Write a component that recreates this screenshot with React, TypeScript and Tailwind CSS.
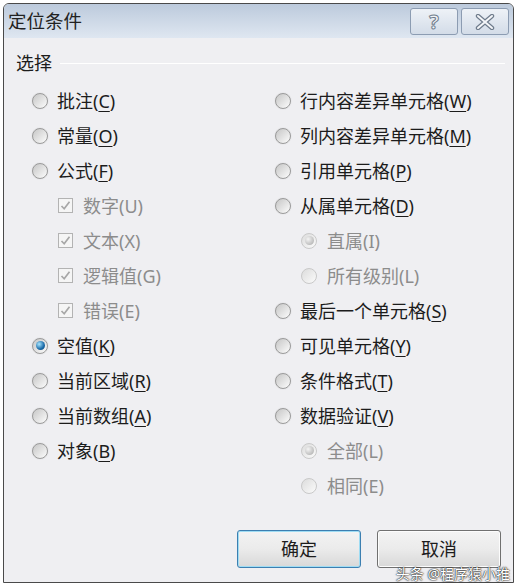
type Item = {
  label: string;
  key?: string;
  kind: "radio" | "check";
  sub?: boolean;
  disabled?: boolean;
  checked?: boolean;
  underline?: boolean;
};

const leftItems: Item[] = [
  { label: "批注", key: "C", kind: "radio", underline: true },
  { label: "常量", key: "O", kind: "radio", underline: true },
  { label: "公式", key: "F", kind: "radio", underline: true },
  { label: "数字", key: "U", kind: "check", sub: true, disabled: true, checked: true },
  { label: "文本", key: "X", kind: "check", sub: true, disabled: true, checked: true },
  { label: "逻辑值", key: "G", kind: "check", sub: true, disabled: true, checked: true },
  { label: "错误", key: "E", kind: "check", sub: true, disabled: true, checked: true },
  { label: "空值", key: "K", kind: "radio", checked: true, underline: true },
  { label: "当前区域", key: "R", kind: "radio", underline: true },
  { label: "当前数组", key: "A", kind: "radio", underline: true },
  { label: "对象", key: "B", kind: "radio", underline: true },
];

const rightItems: Item[] = [
  { label: "行内容差异单元格", key: "W", kind: "radio", underline: true },
  { label: "列内容差异单元格", key: "M", kind: "radio", underline: true },
  { label: "引用单元格", key: "P", kind: "radio", underline: true },
  { label: "从属单元格", key: "D", kind: "radio", underline: true },
  { label: "直属", key: "I", kind: "radio", sub: true, disabled: true, checked: true },
  { label: "所有级别", key: "L", kind: "radio", sub: true, disabled: true },
  { label: "最后一个单元格", key: "S", kind: "radio", underline: true },
  { label: "可见单元格", key: "Y", kind: "radio", underline: true },
  { label: "条件格式", key: "T", kind: "radio", underline: true },
  { label: "数据验证", key: "V", kind: "radio", underline: true },
  { label: "全部", key: "L", kind: "radio", sub: true, disabled: true, checked: true },
  { label: "相同", key: "E", kind: "radio", sub: true, disabled: true },
];

const Radio = ({ checked, disabled }: { checked?: boolean; disabled?: boolean }) => (
  <span
    className={`flex items-center justify-center w-[16px] h-[16px] rounded-full border bg-gradient-to-br shrink-0 ${
      disabled
        ? "border-[#c9c9c9] from-[#dcdcdc] to-[#fbfbfb]"
        : "border-[#9a9a9a] from-[#c6c6c6] to-[#fdfdfd] shadow-[0_0_1px_#bbb]"
    }`}
  >
    {checked && (
      <span
        className={`w-[9px] h-[9px] rounded-full ${
          disabled
            ? "bg-[radial-gradient(circle_at_35%_35%,#f4f4f4,#a6a6a6)]"
            : "bg-[radial-gradient(circle_at_35%_35%,#a8e6ff,#1a6aa8_60%,#0b3e6b)]"
        }`}
      />
    )}
  </span>
);

const Check = () => (
  <span className="flex items-center justify-center w-[15px] h-[15px] border border-[#b3b3b3] bg-[#f5f5f5] shrink-0">
    <svg width="11" height="11" viewBox="0 0 11 11">
      <path d="M1.5 6 L4.2 8.8 L9.5 1.8" fill="none" stroke="#a7a7a7" strokeWidth="1.7" />
    </svg>
  </span>
);

const Row = ({ item }: { item: Item }) => (
  <div className={`flex items-center h-[35px] ${item.sub ? "pl-[26px]" : ""}`}>
    {item.kind === "radio" ? (
      <Radio checked={item.checked} disabled={item.disabled} />
    ) : (
      <Check />
    )}
    <span
      className={`text-[18px] leading-none whitespace-nowrap ${item.sub ? "ml-[10px]" : "ml-[9px]"} ${
        item.disabled ? "text-[#8c8c8c]" : "text-[#1c1c1c]"
      }`}
    >
      {item.label}(
      {item.underline ? <span className="underline underline-offset-[3px]">{item.key}</span> : item.key})
    </span>
  </div>
);

const App = () => {
  return (
    <div className="relative w-[518px] h-[588px] bg-white pt-[3px] pl-[3px] font-['Noto_Sans','Noto_Sans_CJK_SC',sans-serif]">
      <div className="w-[511px] h-[580px] border border-[#4a4a4a] rounded-t-[6px] bg-[#efeff2] flex flex-col overflow-hidden">
        {/* title bar */}
        <div className="h-[34px] flex items-center pl-[4px] pr-[4px] bg-gradient-to-b from-[#bccadc] to-[#dfe7f1]">
          <span className="text-[18.5px] text-[#222] leading-none">定位条件</span>
          <div className="ml-auto flex gap-[3px] mt-[1px]">
            <div className="w-[48px] h-[27px] rounded-[3px] border border-[#8c9cb2] bg-gradient-to-b from-[#eef2f7] to-[#d3dce8] flex items-center justify-center">
              <span className="text-[20px] leading-none text-[#f2f4f7] font-bold [-webkit-text-stroke:1px_#6f7c8c]">?</span>
            </div>
            <div className="w-[48px] h-[27px] rounded-[3px] border border-[#8c9cb2] bg-gradient-to-b from-[#eef2f7] to-[#d3dce8] flex items-center justify-center">
              <svg width="20" height="16" viewBox="0 0 20 16">
                <path d="M3 2 L17 14 M17 2 L3 14" stroke="#6f7c8c" strokeWidth="4.4" strokeLinecap="round" />
                <path d="M3 2 L17 14 M17 2 L3 14" stroke="#f4f6f9" strokeWidth="2" strokeLinecap="round" />
              </svg>
            </div>
          </div>
        </div>

        {/* body */}
        <div className="flex-1 flex flex-col">
          <div className="mt-[14px] h-[22px] flex items-center pl-[12px] pr-[8px]">
            <span className="text-[18px] leading-none text-[#1c1c1c]">选择</span>
            <div className="flex-1 h-px bg-[#d5d5da] ml-[8px] border-b border-white" />
          </div>

          <div className="mt-[9px] flex pl-[28px]">
            <div className="w-[243px]">
              {leftItems.map((it, i) => (
                <Row key={i} item={it} />
              ))}
            </div>
            <div>
              {rightItems.map((it, i) => (
                <Row key={i} item={it} />
              ))}
            </div>
          </div>

          <div className="mt-auto mb-[14px] mr-[12px] flex justify-end gap-[16px]">
            <button className="w-[124px] h-[38px] rounded-[3px] border border-[#3c7fb1] bg-gradient-to-b from-[#f3f3f3] via-[#ebebeb] to-[#d8d8d8] shadow-[inset_0_0_0_1px_#9fdcf3] text-[18px] text-[#1c1c1c]">
              确定
            </button>
            <button className="w-[124px] h-[38px] rounded-[3px] border border-[#707070] bg-gradient-to-b from-[#f3f3f3] via-[#ebebeb] to-[#d8d8d8] shadow-[inset_0_0_0_1px_#fcfcfc] text-[18px] text-[#1c1c1c]">
              取消
            </button>
          </div>
        </div>
      </div>

      <span className="absolute right-[8px] bottom-[7px] text-[14px] leading-none text-white [text-shadow:0_0_2px_#000,0_0_1px_#000]">
        头条 @程序猿小推
      </span>
    </div>
  );
};

export default App;
